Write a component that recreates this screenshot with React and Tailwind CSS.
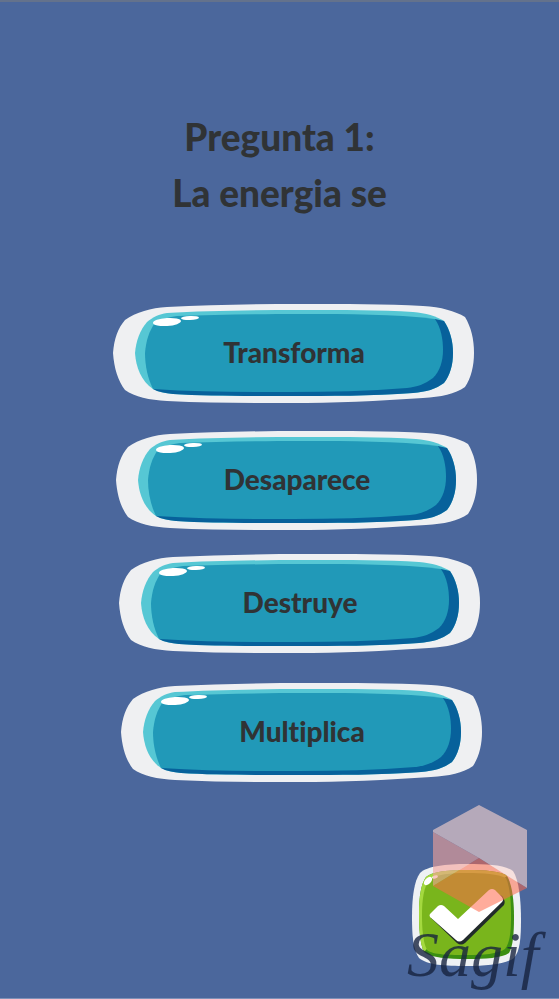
const answers = [
  { label: 'Transforma', place: 'ml-[113px]' },
  { label: 'Desaparece', place: 'ml-[116px] mt-7' },
  { label: 'Destruye', place: 'ml-[119px] mt-6' },
  { label: 'Multiplica', place: 'ml-[121px] mt-[30px]' },
];

function Plate() {
  return (
    <svg viewBox="0 0 362 99" className="absolute inset-0 h-full w-full" aria-hidden="true">
      <path fill="#eff0f2" d="M0 49C1 35 5 24 12 16C23 8 38 4 54 3C96 1 140 0 187 0C232 0 272 0 310 2C328 3 342 7 352 13C358 23 361 35 361 49C361 62 358 74 352 83C342 90 328 93 310 94C266 97 220 99 177 99C132 99 94 99 54 97C36 96 22 93 12 86C5 77 1 64 0 49Z" />
      <path fill="#56c7d4" d="M22 49C23 37 27 26 34 18C40 13 46 10 54 9C90 7 138 6 187 6C230 6 268 6 300 8C313 9 323 12 331 17C337 26 340 37 340 49C340 61 337 71 331 79C323 85 313 88 300 89C258 92 216 92 177 92C130 92 92 92 60 90C52 89 45 88 40 85C28 77 23 63 22 49Z" />
      <path fill="#07619b" d="M322 15L331 17C337 26 340 37 340 49C340 61 337 71 331 79C323 85 313 88 300 89C258 92 216 92 177 92C130 92 92 92 60 90C52 89 45 88 40 85L294 60Z" />
      <path fill="#2199b8" d="M32 49C33 37 36 27 42 19C48 15 56 13 64 12C100 11 140 10 187 10C236 10 280 10 322 15C328 24 330 35 330 46C330 57 327 67 320 74C312 80 304 83 294 84C255 87 216 88 177 88C130 88 84 88 40 85C35 75 32 62 32 49Z" />
      <ellipse cx="54" cy="18" rx="14" ry="4" fill="#fff" transform="rotate(-4 54 18)" />
      <ellipse cx="77" cy="14" rx="9" ry="2" fill="#fff" transform="rotate(-2 77 14)" />
    </svg>
  );
}

function CheckTile() {
  return (
    <svg viewBox="0 0 111 104" className="block h-[104px] w-[111px]" aria-hidden="true">
      <path fill="#eef1f4" d="M1 54C1 35 3 18 9 10C16 3 35 1 56 1C77 1 94 2 102 8C108 17 110 37 110 57C110 75 109 88 103 95C95 101 75 103 56 103C34 103 16 102 8 95C2 86 1 72 1 54Z" />
      <path fill="#3b8f12" d="M8 50C8 34 10 21 15 14C22 8 38 7 56 7C74 7 90 8 96 13C101 21 103 37 103 54C103 71 102 83 98 90C91 95 74 96 56 96C37 96 20 95 13 89C9 81 8 66 8 50Z" />
      <path fill="#a4d93f" d="M8 50C8 34 10 21 15 14C22 8 38 7 56 7C74 7 90 8 96 13L50 50L13 89C9 81 8 66 8 50Z" />
      <path fill="#79b51c" d="M11 52C11 36 13 24 18 17C25 11 40 10 56 10C72 10 87 11 95 15C99 24 100 38 100 53C100 68 99 80 94 86C87 91 72 92 56 92C39 92 22 92 16 87C12 79 11 66 11 52Z" />
      <path fill="#222b2b" d="M20 55L30 43L48 58L82 29L91 33Q95 38 93 42L54 80Q50 83 46 80Z" />
      <path fill="#fff" d="M19 54Q18 52 19 51L27 43Q30 41 33 43L47 56L78 27Q81 25 84 27L91 34Q93 37 91 39L52 77Q48 80 45 77Z" />
      <ellipse cx="17" cy="18" rx="5" ry="3" fill="#fff" transform="rotate(-45 17 18)" />
      <ellipse cx="24" cy="14" rx="3" ry="1.5" fill="#fff" transform="rotate(-15 24 14)" />
    </svg>
  );
}

function CubeMark() {
  return (
    <svg viewBox="0 0 96 107" className="absolute -top-[58px] left-[21px] h-[107px] w-24" aria-hidden="true">
      <path fill="#fbd6cf" fillOpacity=".6" d="M47 0L95 25V83L47 53L1 27V25Z" />
      <path fill="#f5a298" fillOpacity=".6" d="M1 27L47 53L1 81Z" />
      <path fill="#ff6848" fillOpacity=".55" d="M47 53L95 83L47 107L1 81Z" />
    </svg>
  );
}

export default function App() {
  return (
    <main className="flex min-h-screen flex-col border-t-2 border-b border-t-[#64728c] border-b-[#7f91b7] bg-[#4b679c] font-[Lato,sans-serif] font-black text-[#303335] [font-variant-ligatures:none]">
      <h1 className="pt-[107px] text-center text-[37px] leading-[56px]">
        Pregunta 1:
        <br />
        La energia se
      </h1>
      <div className="mt-[83px] flex flex-col items-start">
        {answers.map(({ label, place }) => (
          <button
            key={label}
            type="button"
            className={`relative h-[99px] w-[362px] pb-1 text-[28px] leading-8 [font-variant-ligatures:none] ${place}`}
          >
            <Plate />
            <span className="relative">{label}</span>
          </button>
        ))}
      </div>
      <div className="mt-[81px] mr-[37px] self-end">
        <button type="button" aria-label="Sagif" className="relative block">
          <CheckTile />
          <CubeMark />
          <span className="absolute top-[52px] -left-1 font-['Liberation_Serif',serif] text-[64px] leading-[80px] font-normal text-[#17233f]/80 italic">
            Sagif
          </span>
        </button>
      </div>
    </main>
  );
}
